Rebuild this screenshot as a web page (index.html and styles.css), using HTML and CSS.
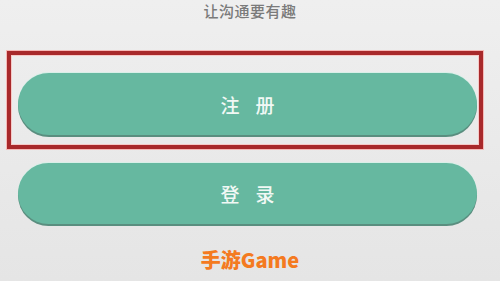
FILE: index.html
```html
<!DOCTYPE html>
<html lang="zh">
<head>
<meta charset="utf-8">
<link rel="stylesheet" href="styles.css">
</head>
<body>
<div class="page">
  <div class="tagline">让沟通要有趣</div>
  <div class="highlight">
    <div class="btn btn-first">注册</div>
  </div>
  <div class="btn btn-second">登录</div>
  <div class="brand">手游Game</div>
</div>
</body>
</html>
```

FILE: styles.css
```css
html, body {
  margin: 0;
  padding: 0;
}
body {
  width: 500px;
  height: 281px;
  overflow: hidden;
  background: linear-gradient(#efefef, #e5e5e5);
  font-family: "Noto Sans CJK SC", "Noto Sans", sans-serif;
}
.page {
  display: flex;
  flex-direction: column;
  height: 281px;
}
.tagline {
  height: 49px;
  padding-top: 2px;
  font-size: 15px;
  font-weight: 500;
  line-height: 18px;
  color: #7a7a7a;
  text-align: center;
  letter-spacing: 0.5px;
}
.highlight {
  box-sizing: border-box;
  margin-left: 7px;
  width: 476px;
  height: 98px;
  border: 4px solid #a8292b;
  box-shadow: 0 0 0 1px #f6b9b7, inset 0 0 0 1px #f6c9c7;
  padding: 18px 0 0 7px;
}
.btn {
  box-sizing: border-box;
  width: 459px;
  background: #66b8a0;
  border-radius: 32px;
  box-shadow: 0 2px 0 #5a8e7f, 0 -1px 0 #d9efe8;
  color: #f1f8f5;
  font-size: 19px;
  font-weight: 500;
  letter-spacing: 16px;
  padding-left: 16px;
  display: flex;
  align-items: center;
  justify-content: center;
}
.btn-first {
  height: 62px;
}
.btn-second {
  height: 61px;
  margin-top: 14px;
  margin-left: 18px;
}
.brand {
  margin-top: 24px;
  text-align: center;
  color: #f47a20;
  font-size: 20px;
  font-weight: 800;
  line-height: 24px;
}
```
